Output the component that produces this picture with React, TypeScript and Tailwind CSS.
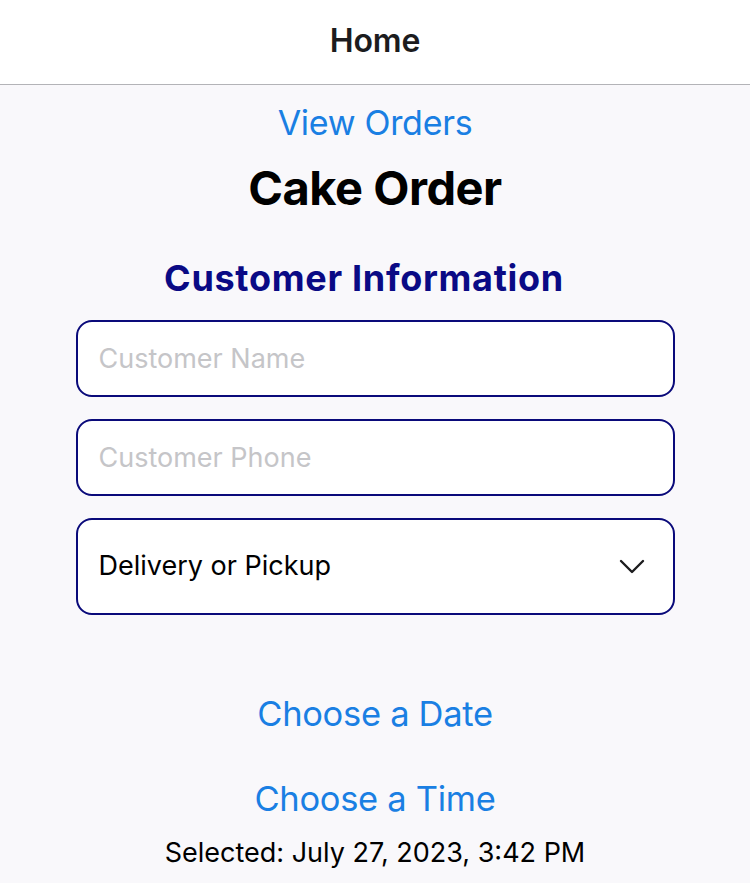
import React from "react";

export default function App() {
  const font = { fontFamily: "Inter, 'Noto Sans', sans-serif" };
  return (
    <div className="w-[750px] h-[883px] bg-[#f9f8fb] flex flex-col overflow-hidden" style={font}>
      <div className="h-[85px] pb-[3px] bg-white border-b border-[#b3b3b7] flex items-center justify-center shrink-0">
        <span className="text-[32px] font-semibold text-[#1c1c1e] tracking-[-0.2px]">Home</span>
      </div>
      <div className="flex flex-col items-center">
        <div className="mt-[17px] h-[40px] flex items-center text-[34px] text-[#1a7fe3] tracking-[-0.3px]">View Orders</div>
        <div className="mt-[21px] h-[50px] flex items-center text-[47px] font-bold text-black tracking-[-0.5px]">Cake Order</div>
        <div className="mt-[43px] h-[44px] pr-[22px] flex items-center text-[36px] font-bold text-[#0a0a85] tracking-[0.7px]">Customer Information</div>
        <div className="mt-[20px] w-[599px] flex flex-col gap-[22px]">
          <div className="h-[77px] pt-[2px] bg-white border-2 border-[#0a0a7a] rounded-[16px] flex items-center px-[21px] text-[27px] text-[#c5c5c8]">Customer Name</div>
          <div className="h-[77px] pt-[2px] bg-white border-2 border-[#0a0a7a] rounded-[16px] flex items-center px-[21px] text-[27px] text-[#c5c5c8]">Customer Phone</div>
          <div className="h-[97px] bg-white border-2 border-[#0a0a7a] rounded-[16px] flex items-center justify-between pl-[21px] pr-[28px] text-[27px] text-black">
            <span>Delivery or Pickup</span>
            <svg width="26" height="16" viewBox="0 0 26 16" fill="none">
              <path d="M2 2 L13 13 L24 2" stroke="#1c1c1e" strokeWidth="2.4" strokeLinecap="round" strokeLinejoin="round" />
            </svg>
          </div>
        </div>
        <div className="mt-[77px] h-[44px] flex items-center text-[34.5px] text-[#1a7fe3] tracking-[-0.3px]">Choose a Date</div>
        <div className="mt-[41px] h-[44px] flex items-center text-[34.5px] text-[#1a7fe3] tracking-[-0.3px]">Choose a Time</div>
        <div className="mt-[15px] h-[34px] flex items-center text-[27px] text-black">Selected: July 27, 2023, 3:42 PM</div>
      </div>
    </div>
  );
}
